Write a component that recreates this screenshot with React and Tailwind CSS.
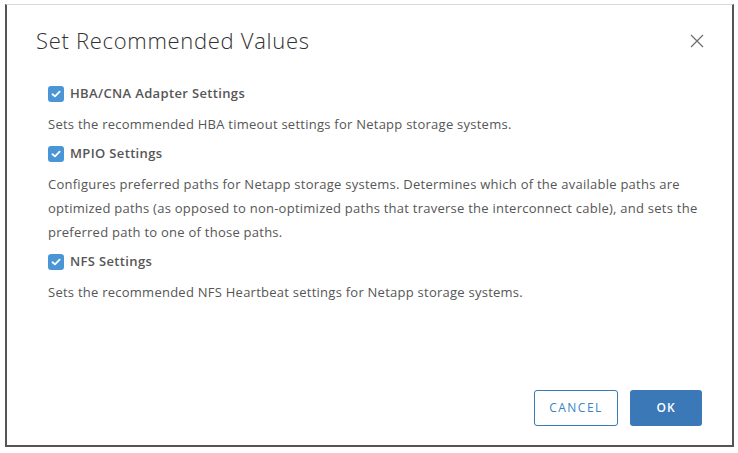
import React from "react";

const items = [
  {
    label: "HBA/CNA Adapter Settings",
    lines: ["Sets the recommended HBA timeout settings for Netapp storage systems."],
  },
  {
    label: "MPIO Settings",
    lines: [
      "Configures preferred paths for Netapp storage systems. Determines which of the available paths are",
      "optimized paths (as opposed to non-optimized paths that traverse the interconnect cable), and sets the",
      "preferred path to one of those paths.",
    ],
  },
  {
    label: "NFS Settings",
    lines: ["Sets the recommended NFS Heartbeat settings for Netapp storage systems."],
  },
];

function Checkbox() {
  return (
    <span className="w-4 h-4 rounded-[3px] bg-[#4a95d6] flex items-center justify-center">
      <svg width="10" height="8" viewBox="0 0 10 8" fill="none">
        <path d="M1.5 4.2 L4 6.4 L8.6 1.6" stroke="white" strokeWidth="1.8" strokeLinecap="round" strokeLinejoin="round" />
      </svg>
    </span>
  );
}

export default function App() {
  return (
    <div className="w-[738px] h-[453px] bg-white pt-1 pl-[5px]" style={{ fontFamily: "'Open Sans', 'Noto Sans', sans-serif" }}>
      <div className="w-[729px] h-[443px] bg-white border-t border-t-[#d8d8d8] border-l-2 border-r-2 border-b-2 border-l-[#555] border-r-[#555] border-b-[#555] flex flex-col">
        {/* header */}
        <div className="flex items-center justify-between pl-[29px] pr-[28px] pt-[19px] h-[51px]">
          <h1 className="text-[22px] leading-8 font-light tracking-[0.7px] text-[#313131]">Set Recommended Values</h1>
          <svg width="14" height="14" viewBox="0 0 14 14" className="text-[#6f6f6f] mt-[2px]">
            <path d="M1 1 L13 13 M13 1 L1 13" stroke="currentColor" strokeWidth="1.3" />
          </svg>
        </div>

        {/* body */}
        <div className="pl-[41px] pr-6 mt-[28px] flex-1">
          {items.map((it, i) => (
            <div key={it.label} className={i > 0 ? "mt-2" : ""}>
              <div className="flex items-center gap-[6px] h-5">
                <Checkbox />
                <span className="text-[13px] font-semibold tracking-[0.35px] text-[#565656]">{it.label}</span>
              </div>
              <p className="mt-2 text-[13px] leading-6 tracking-[0.25px] text-[#565656] whitespace-nowrap">
                {it.lines.map((l, j) => (
                  <React.Fragment key={j}>
                    {l}
                    {j < it.lines.length - 1 && <br />}
                  </React.Fragment>
                ))}
              </p>
            </div>
          ))}
        </div>

        {/* footer */}
        <div className="flex justify-end gap-[12px] pr-[30px] pb-[19px]">
          <button className="w-[84px] h-9 rounded-[3px] border border-[#3b78b8] text-[#3a84c4] text-[12px] tracking-[1.5px] bg-white">
            CANCEL
          </button>
          <button className="w-[72px] h-9 rounded-[3px] bg-[#3b78b8] text-white text-[12px] font-semibold tracking-[1px]">
            OK
          </button>
        </div>
      </div>
    </div>
  );
}
